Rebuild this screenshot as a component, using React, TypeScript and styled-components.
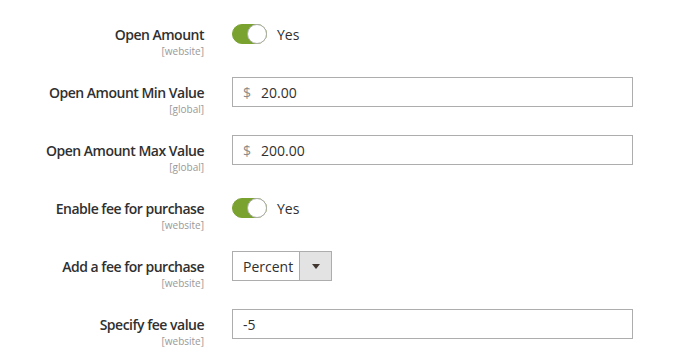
import React from "react";
import styled, { createGlobalStyle } from "styled-components";

const GlobalStyle = createGlobalStyle`
  html, body {
    margin: 0;
    padding: 0;
    background: #ffffff;
    font-family: "Open Sans", "Liberation Sans", sans-serif;
    color: #303030;
  }
`;

const Form = styled.div`
  display: flex;
  flex-direction: column;
  gap: 18px;
  padding-top: 19px;
`;

const Row = styled.div`
  display: grid;
  grid-template-columns: 204px 401px;
  column-gap: 28px;
  align-items: start;
`;

const Label = styled.div`
  display: flex;
  flex-direction: column;
  align-items: flex-end;
  padding-top: 6px;
  text-align: right;
`;

const Title = styled.span`
  font-size: 14px;
  font-weight: 600;
  letter-spacing: -0.5px;
  line-height: 19px;
  color: #303030;
`;

const Scope = styled.span`
  font-size: 10px;
  line-height: 15px;
  color: #999999;
`;

const Control = styled.div`
  display: flex;
  align-items: center;
  height: 30px;
`;

const Track = styled.span<{ on?: boolean }>`
  position: relative;
  box-sizing: border-box;
  width: 35px;
  height: 20px;
  border-radius: 10px;
  background: ${p => (p.on ? "#79a22e" : "#e3e3e3")};
  border: 1px solid ${p => (p.on ? "#79a22e" : "#adadad")};
`;

const Knob = styled.span<{ on?: boolean }>`
  position: absolute;
  top: -1px;
  ${p => (p.on ? "right: -1px;" : "left: -1px;")}
  box-sizing: border-box;
  width: 20px;
  height: 20px;
  border-radius: 50%;
  background: #ffffff;
  border: 1px solid #adadad;
`;

const ToggleText = styled.span`
  margin-left: 10px;
  font-size: 14px;
  color: #303030;
`;

const InputBox = styled.div`
  box-sizing: border-box;
  display: flex;
  align-items: center;
  width: 100%;
  height: 30px;
  padding: 0 10px;
  border: 1px solid #adadad;
  font-size: 14px;
  color: #303030;
`;

const Addon = styled.span`
  color: #8a8a8a;
  margin-right: 10px;
`;

const Select = styled.div`
  box-sizing: border-box;
  display: flex;
  width: 100px;
  height: 30px;
  border: 1px solid #adadad;
  font-size: 14px;
`;

const SelectValue = styled.span`
  flex: 1;
  display: flex;
  align-items: center;
  padding-left: 10px;
`;

const SelectButton = styled.span`
  width: 31px;
  display: flex;
  align-items: center;
  justify-content: center;
  background: #e3e3e3;
  border-left: 1px solid #adadad;
`;

const Arrow = styled.span`
  width: 0;
  height: 0;
  border-left: 4px solid transparent;
  border-right: 4px solid transparent;
  border-top: 5px solid #41362f;
  margin-top: 1px;
`;

const Toggle: React.FC<{ on: boolean; text: string }> = ({ on, text }) => (
  <Control>
    <Track on={on}>
      <Knob on={on} />
    </Track>
    <ToggleText>{text}</ToggleText>
  </Control>
);

const Field: React.FC<{ title: string; scope: string; children: React.ReactNode }> = ({ title, scope, children }) => (
  <Row>
    <Label>
      <Title>{title}</Title>
      <Scope>{scope}</Scope>
    </Label>
    {children}
  </Row>
);

export default function App() {
  return (
    <>
      <GlobalStyle />
      <Form>
        <Field title="Open Amount" scope="[website]">
          <Toggle on text="Yes" />
        </Field>
        <Field title="Open Amount Min Value" scope="[global]">
          <InputBox>
            <Addon>$</Addon>
            20.00
          </InputBox>
        </Field>
        <Field title="Open Amount Max Value" scope="[global]">
          <InputBox>
            <Addon>$</Addon>
            200.00
          </InputBox>
        </Field>
        <Field title="Enable fee for purchase" scope="[website]">
          <Toggle on text="Yes" />
        </Field>
        <Field title="Add a fee for purchase" scope="[website]">
          <Control>
            <Select>
              <SelectValue>Percent</SelectValue>
              <SelectButton>
                <Arrow />
              </SelectButton>
            </Select>
          </Control>
        </Field>
        <Field title="Specify fee value" scope="[website]">
          <InputBox>-5</InputBox>
        </Field>
      </Form>
    </>
  );
}
